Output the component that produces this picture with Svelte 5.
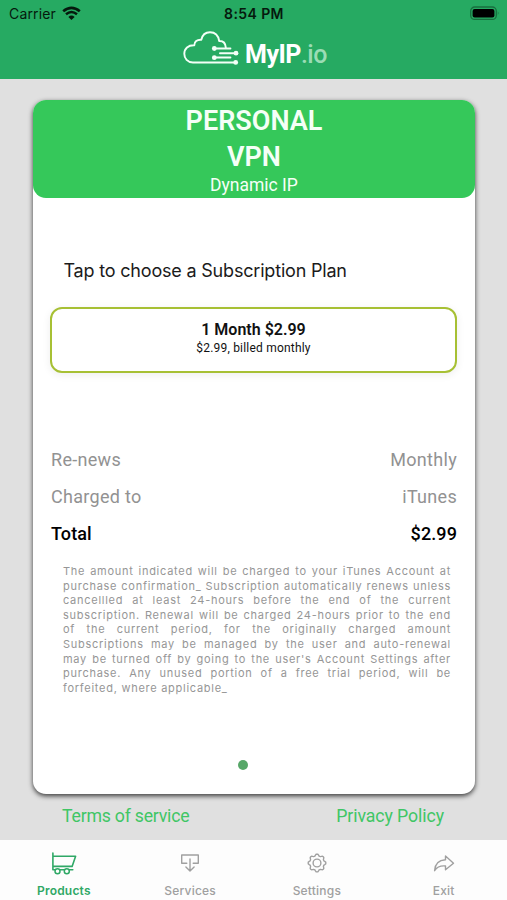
<script>
  const legal = [
    'The amount indicated will be charged to your iTunes Account at',
    'purchase confirmation_ Subscription automatically renews unless',
    'cancellled at least 24-hours before the end of the current',
    'subscription. Renewal will be charged 24-hours prior to the end',
    'of the current period, for the originally charged amount',
    'Subscriptions may be managed by the user and auto-renewal',
    "may be turned off by going to the user's Account Settings after",
    'purchase. Any unused portion of a free trial period, will be',
    'forfeited, where applicable_'
  ];
  const rows = [
    { label: 'Re-news', value: 'Monthly' },
    { label: 'Charged to', value: 'iTunes' },
    { label: 'Total', value: '$2.99', strong: true }
  ];
  const tabs = ['Products', 'Services', 'Settings', 'Exit'];

  // Outline of the eight-toothed settings gear
  const gear = Array.from({ length: 64 }, (_, i) => {
    const a = (i / 64) * Math.PI * 2;
    const r = 8 + 0.85 * Math.tanh(2 * Math.cos(8 * a));
    return `${(14 + r * Math.sin(a)).toFixed(2)},${(13 - r * Math.cos(a)).toFixed(2)}`;
  }).join(' ');
</script>

<div class="screen">
  <header>
    <div class="status">
      <div class="carrier">
        <span>Carrier</span>
        <svg width="19" height="15" viewBox="0 0 19 15">
          <path d="M9.5 14 L6.4 10.9 Q9.5 8.3 12.6 10.9 Z" fill="#05190d" />
          <path d="M4 8.3 Q9.5 3.8 15 8.3" fill="none" stroke="#05190d" stroke-width="2.5" />
          <path d="M1.2 5.2 Q9.5 -1.6 17.8 5.2" fill="none" stroke="#05190d" stroke-width="2.7" />
        </svg>
      </div>
      <span class="time">8:54 PM</span>
      <svg class="battery" width="31" height="15" viewBox="0 0 31 15">
        <rect x="0.7" y="1" width="25.6" height="12.4" rx="4" fill="none" stroke="#18703f" stroke-width="1.3" />
        <rect x="2.6" y="2.9" width="21.8" height="8.6" rx="2" fill="#000" />
        <path d="M27.8 5.2 Q29.6 7.2 27.8 9.2 Z" fill="#18703f" />
      </svg>
    </div>
    <div class="logo">
      <svg width="56" height="36" viewBox="0 0 56 36" fill="none" stroke="#f3fff7" stroke-width="1.9" stroke-linecap="round" stroke-linejoin="round">
        <path d="M52 33.5 H10 C4.5 33.5 1.3 29.5 1.3 24.8 C1.3 19.5 5.2 16 11.3 16.2 C11.3 12.8 14 10.5 18.3 10.8 C19.3 6 22.7 3.2 27 3.2 C32 3.2 35.3 6.3 36.2 12 C40.3 11.8 42.5 14.4 42.8 18.6" />
        <path d="M32 19.5 H47.4 M37 24.2 H53 M32 28.6 H47.4" stroke-width="2" />
        <g fill="#f3fff7" stroke="none">
          <circle cx="31.3" cy="19.5" r="2.4" /><circle cx="53" cy="24.2" r="2.4" />
          <circle cx="31.3" cy="28.7" r="2.4" /><circle cx="52.7" cy="33.4" r="2.4" />
        </g>
      </svg>
      <div class="brand"><b>MyIP</b><span>.io</span></div>
    </div>
  </header>

  <main>
    <section class="card">
      <div class="title">
        <h1>PERSONAL<br />VPN</h1>
        <p>Dynamic IP</p>
      </div>
      <p class="hint">Tap to choose a Subscription Plan</p>
      <button class="plan">
        <strong>1 Month $2.99</strong>
        <small>$2.99, billed monthly</small>
      </button>
      <div class="rows">
        {#each rows as row}
          <div class="row" class:strong={row.strong}><span>{row.label}</span><span>{row.value}</span></div>
        {/each}
      </div>
      <div class="legal">
        {#each legal as line}<p>{line}</p>{/each}
      </div>
      <i class="dot"></i>
    </section>
    <div class="links"><span class="terms">Terms of service</span><span class="privacy">Privacy Policy</span></div>
  </main>

  <nav>
    {#each tabs as tab, i}
      <div class="tab" class:active={i === 0}>
        <svg width="28" height="26" viewBox="0 0 28 26" fill="none" stroke="currentColor" stroke-width="1.4" stroke-linejoin="round" stroke-linecap="round">
          {#if i === 0}
            <path d="M2.9 3 V19.7 H22.8 M2.9 6.3 H25.6 L22.1 16.4 H2.9" stroke-width="1.6" />
            <circle cx="7.5" cy="21.2" r="2.5" fill="#fdfefd" stroke-width="1.5" /><circle cx="16.8" cy="21.2" r="2.5" fill="#fdfefd" stroke-width="1.5" />
          {:else if i === 1}
            <path d="M10.8 13.2 H5.7 V5 H22.3 V13.2 H17.2 M14 9 V20.8 M9.9 17 L14 21 L18.1 17" />
          {:else if i === 2}
            <polygon points={gear} /><circle cx="14" cy="13" r="3.9" />
          {:else}
            <path d="M15.5 6 L23.5 13.2 L15.5 19.8 V16 C10.5 15.5 7 17 4.6 20.7 C5 14 8.6 10.2 15.5 9.8 Z" />
          {/if}
        </svg>
        <span>{tab}</span>
      </div>
    {/each}
  </nav>
</div>

<style>
  .screen { width: 507px; height: 900px; display: flex; flex-direction: column; overflow: hidden; background: #e0e0e0; font-family: Roboto, sans-serif; }
  p, h1 { margin: 0; }
  header { height: 79px; flex: none; background: #26aa62; }
  .status { display: grid; grid-template-columns: 1fr auto 1fr; align-items: center; height: 27px; padding: 0 6px 0 7px; font: 14px/27px Inter, sans-serif; color: #05190d; }
  .carrier { display: flex; align-items: center; gap: 6px; padding-left: 2px; letter-spacing: 0.15px; }
  .time { font-weight: 600; letter-spacing: 0.4px; }
  .battery { justify-self: end; }
  .logo { display: flex; padding: 2px 0 0 183px; }
  .brand { margin: 8px 0 0 6px; font-size: 25px; line-height: 36px; color: #fff; white-space: nowrap; letter-spacing: -0.5px; }
  .brand span { color: #9bdcb5; font-weight: 500; }
  main { height: 761px; flex: none; padding: 21px 32px 0 33px; box-sizing: border-box; }
  .card { height: 694px; display: flex; flex-direction: column; background: #fff; border-radius: 13px; box-shadow: 0 2px 5px rgba(0, 0, 0, 0.75); }
  .title { height: 98px; flex: none; border-radius: 13px; background: #35c85a; color: #f5fff7; text-align: center; }
  h1 { font-size: 27px; line-height: 36px; font-weight: 600; padding-top: 3px; }
  .title p { font-size: 17.5px; line-height: 20px; }
  .hint { margin: 59px 0 0 30.5px; font: 18px/28px Inter, sans-serif; letter-spacing: -0.19px; color: #1b1b1b; }
  .plan { margin: 22px 18px 0 17px; height: 66px; flex: none; padding: 0 0 3px; display: flex; flex-direction: column; align-items: center; justify-content: center; border: 2px solid #a7c034; border-radius: 12px; background: #fff; box-shadow: 0 2px 8px rgba(0, 0, 0, 0.07); font-family: Roboto, sans-serif; color: #111; }
  .plan strong { font-size: 16px; line-height: 20px; font-weight: 600; }
  .plan small { font-size: 12px; line-height: 17px; letter-spacing: 0.2px; }
  .rows { margin: 69px 18px 0; }
  .row { display: flex; justify-content: space-between; font-size: 18px; line-height: 36.7px; color: #929292; letter-spacing: 0.3px; }
  .row.strong { color: #000; font-weight: 500; letter-spacing: 0.1px; padding-top: 0.5px; }
  .legal { margin: 11.5px 24px 0 30px; font: 11px/14.6px Inter, sans-serif; color: #969696; letter-spacing: 0.73px; }
  .legal p { text-align: justify; text-align-last: justify; white-space: nowrap; }
  .legal p:last-child { text-align-last: left; }
  .dot { width: 10px; height: 10px; flex: none; margin: 65px 0 0 205px; border-radius: 50%; background: #57a768; }
  .links { display: flex; justify-content: space-between; padding: 8px 31px 0 29px; font-size: 17.7px; line-height: 28px; color: #3fc665; }
  .terms { letter-spacing: -0.22px; }
  .privacy { letter-spacing: -0.08px; }
  nav { height: 60px; flex: none; display: grid; grid-template-columns: repeat(4, 1fr); background: #fdfdfd; }
  .tab { display: flex; flex-direction: column; align-items: center; padding-top: 10px; color: #a0a0a0; font: 500 12px/15px Inter, sans-serif; letter-spacing: 0.2px; }
  .tab span { margin-top: 7px; }
  .active { color: #2fa866; padding-left: 1px; }
  .active span { font-weight: 600; }
</style>
